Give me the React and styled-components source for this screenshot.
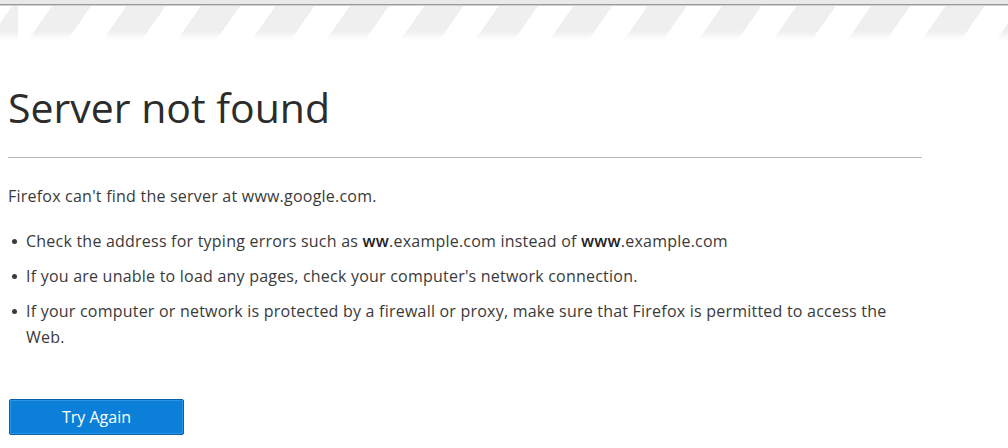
import React from 'react';
import styled, { createGlobalStyle } from 'styled-components';

const GlobalStyle = createGlobalStyle`
  html, body {
    margin: 0;
    padding: 0;
    background: #fff;
  }
  body {
    font-family: "Open Sans", "Liberation Sans", sans-serif;
    color: #3a3a3a;
  }
`;

const Page = styled.div`
  width: 1008px;
  height: 448px;
  overflow: hidden;
  background: #fff;
`;

/* bandeau hachuré en haut de la page */
const Stripes = styled.div`
  height: 36px;
  border-top: 4px solid #e9e9e9;
  box-shadow: inset 0 1px 0 #9a9a9a, inset 0 2px 0 #d0d0d0;
  background:
    linear-gradient(to bottom, rgba(255, 255, 255, 0) 75%, #fff 100%),
    repeating-linear-gradient(
      125deg,
      #fff 0px,
      #fff 29px,
      #efefef 29px,
      #efefef 61px
    );
  background-position: 0 0, 18px 0;
`;

const Content = styled.div`
  width: 914px;
  padding: 39px 0 0 8px;
`;

const Title = styled.h1`
  margin: 0;
  font-size: 41px;
  font-weight: 400;
  color: #2c2c2c;
  line-height: 56px;
  padding-bottom: 22px;
  border-bottom: 1px solid #b8b8b8;
`;

const Lead = styled.p`
  margin: 28px 0 0;
  font-size: 16px;
  letter-spacing: 0.22px;
  line-height: 20px;
`;

const Tips = styled.ul`
  list-style: none;
  margin: 22px 0 0;
  padding: 0;
  width: 900px;
`;

const Tip = styled.li`
  position: relative;
  padding-left: 18px;
  font-size: 16px;
  letter-spacing: 0.22px;
  line-height: 26px;
  margin-bottom: 9px;

  &:last-child {
    margin-bottom: 0;
  }

  &::before {
    content: '';
    position: absolute;
    left: 4px;
    top: 11px;
    width: 5px;
    height: 5px;
    border-radius: 50%;
    background: #3a3a3a;
  }
`;

const Strong = styled.span`
  font-weight: 600;
  color: #222;
`;

const RetryButton = styled.button`
  display: block;
  margin: 49px 0 0 1px;
  width: 175px;
  height: 36px;
  border: 1px solid #0a5fa8;
  border-radius: 2px;
  background: #0c7fd9;
  box-shadow: inset 0 0 0 1px #2a95e6;
  color: #fff;
  font-family: "Open Sans", "Liberation Sans", sans-serif;
  font-size: 16px;
  cursor: pointer;
`;

export default function App() {
  return (
    <Page>
      <GlobalStyle />
      <Stripes />
      <Content>
        <Title>Server not found</Title>
        <Lead>Firefox can't find the server at www.google.com.</Lead>
        <Tips>
          <Tip>
            Check the address for typing errors such as <Strong>ww</Strong>.example.com instead of{' '}
            <Strong>www</Strong>.example.com
          </Tip>
          <Tip>If you are unable to load any pages, check your computer's network connection.</Tip>
          <Tip>
            If your computer or network is protected by a firewall or proxy, make sure that Firefox is
            permitted to access the Web.
          </Tip>
        </Tips>
        <RetryButton>Try Again</RetryButton>
      </Content>
    </Page>
  );
}
